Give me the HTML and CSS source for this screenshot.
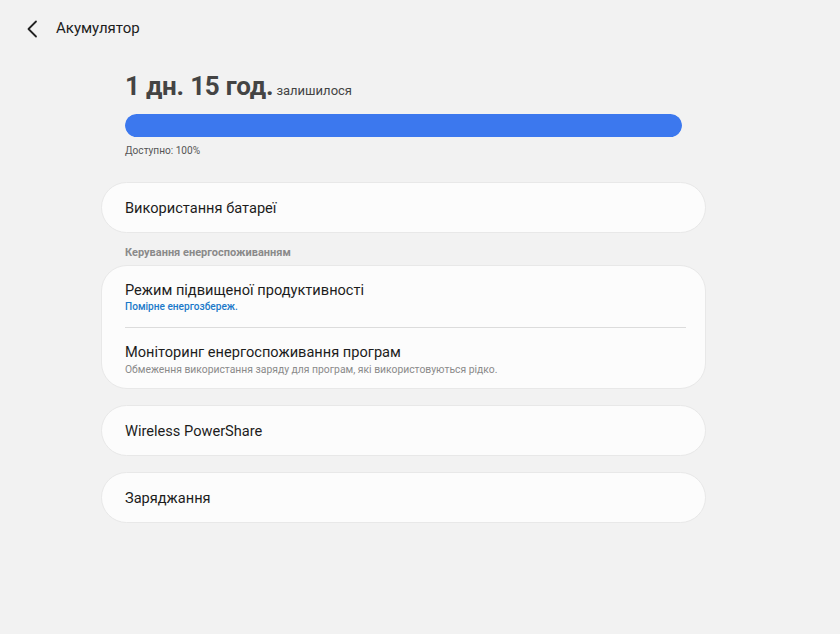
FILE: index.html
```html
<!DOCTYPE html>
<html>
<head>
<meta charset="utf-8">
<link rel="stylesheet" href="styles.css">
</head>
<body>
<header class="topbar">
  <svg class="back" width="12" height="18" viewBox="0 0 12 18"><path d="M10 1.5 L2.5 9 L10 16.5" fill="none" stroke="#222" stroke-width="1.8" stroke-linecap="round" stroke-linejoin="round"/></svg>
  <span class="title">Акумулятор</span>
</header>
<main class="content">
  <section class="summary">
    <div class="remain"><span class="big">1 дн. 15 год.</span> <span class="small">залишилося</span></div>
    <div class="bar"><div class="fill" style="width:100%"></div></div>
    <div class="avail">Доступно: 100%</div>
  </section>
  <div class="card single"><div class="item-title">Використання батареї</div></div>
  <div class="section-label">Керування енергоспоживанням</div>
  <div class="card group">
    <div class="row first">
      <div class="item-title">Режим підвищеної продуктивності</div>
      <div class="item-sub blue">Помірне енергозбереж.</div>
    </div>
    <div class="divider"></div>
    <div class="row second">
      <div class="item-title">Моніторинг енергоспоживання програм</div>
      <div class="item-sub">Обмеження використання заряду для програм, які використовуються рідко.</div>
    </div>
  </div>
  <div class="card single"><div class="item-title">Wireless PowerShare</div></div>
  <div class="card single"><div class="item-title">Заряджання</div></div>
</main>
</body>
</html>
```
FILE: styles.css
```css
html, body {
  margin: 0;
  padding: 0;
  background: #f2f2f2;
  font-family: Roboto, "Noto Sans", sans-serif;
  color: #1c1c1c;
  width: 840px;
  height: 634px;
  overflow: hidden;
}
.topbar {
  display: flex;
  align-items: center;
  height: 56px;
  padding-left: 26px;
}
.back { margin-top: 1px; }
.title {
  margin-left: 18px;
  font-size: 15px;
  color: #1c1c1c;
}
.content {
  width: 605px;
  margin-left: 101px;
  display: flex;
  flex-direction: column;
}
.summary {
  padding: 15px 24px 0 24px;
}
.remain {
  display: flex;
  align-items: baseline;
  height: 34px;
}
.big {
  font-size: 26px;
  font-weight: 700;
  color: #444;
  letter-spacing: -0.2px;
}
.small {
  font-size: 13px;
  color: #444;
  margin-left: 3px;
}
.bar {
  margin-top: 9px;
  width: 557px;
  height: 23px;
  border-radius: 12px;
  background: #dfe7f7;
  overflow: hidden;
}
.fill {
  height: 100%;
  background: #3c78ee;
  border-radius: 12px;
}
.avail {
  margin-top: 8px;
  font-size: 10.1px;
  color: #555;
}
.card {
  background: #fcfcfc;
  border: 1px solid #e8e8e8;
  border-radius: 26px;
  box-sizing: border-box;
}
.single {
  height: 51px;
  display: flex;
  align-items: center;
  padding-left: 23px;
  margin-top: 16px;
}
.summary + .single { margin-top: 26px; }
.item-title {
  font-size: 14.6px;
  color: #1c1c1c;
}
.section-label {
  font-size: 11px;
  font-weight: 700;
  color: #8a8a8a;
  padding-left: 24px;
  margin-top: 13px;
  height: 19px;
  line-height: 13px;
}
.group {
  margin-top: 0;
  padding: 0 19px 0 23px;
  height: 124px;
  display: flex;
  flex-direction: column;
}
.row {
  display: flex;
  flex-direction: column;
  justify-content: center;
}
.row.first { height: 62px; padding-top: 1px; box-sizing: border-box; }
.row.second { height: 61px; padding-top: 3px; box-sizing: border-box; }
.row .item-sub { margin-top: 2px; }
.item-sub {
  font-size: 10.35px;
  color: #8a8a8a;
}
.item-sub.blue {
  color: #1b79c9;
  font-weight: 500;
  font-size: 10.1px;
}
.divider {
  height: 1px;
  background: #dcdcdc;
}
.group + .single { margin-top: 16px; }
```
